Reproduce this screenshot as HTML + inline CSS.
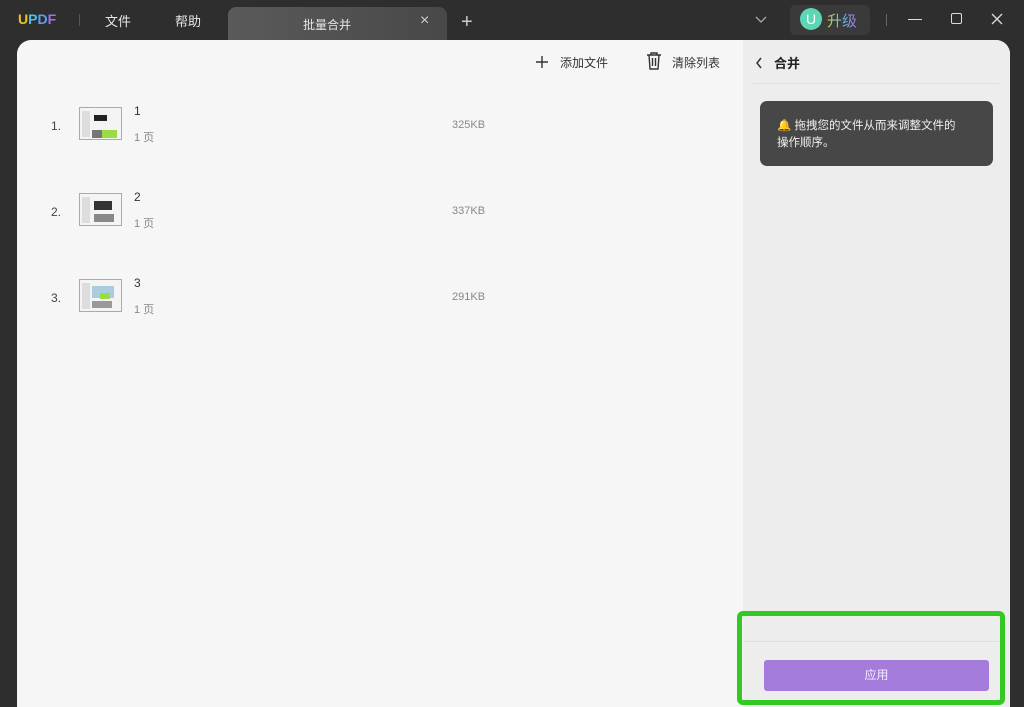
<!DOCTYPE html><html><head><meta charset="utf-8"><style>
*{margin:0;padding:0;box-sizing:border-box}
body{width:1024px;height:707px;background:#2e2e2e;font-family:"Liberation Sans","Noto Sans CJK SC",sans-serif;position:relative;overflow:hidden;font-size:12px}
.a{position:absolute}
.tb{color:#e6e6e6;font-size:13px}
.main{left:17px;top:40px;width:993px;height:667px;background:#f6f6f6;border-radius:14px 14px 0 0;overflow:hidden}
.right{left:726px;top:0;width:267px;height:667px;background:#ededed}
.num{color:#444;font-size:12px}
.th{width:43px;height:33px;background:#f4f4f4;border:1px solid #aaa}
.sz{color:#888;font-size:11px}
</style></head><body>
<div class="a" style="left:18px;top:11px;font-weight:bold;font-size:14px;letter-spacing:0px"><span style="color:#f0c020">U</span><span style="color:#4cc0e8">P</span><span style="color:#5a9ff0">D</span><span style="color:#a070e8">F</span></div>
<div class="a" style="left:79px;top:14px;width:1px;height:12px;background:#555"></div>
<div class="a tb" style="left:105px;top:11px">文件</div>
<div class="a tb" style="left:175px;top:11px">帮助</div>
<div class="a" style="left:228px;top:7px;width:219px;height:33px;background:linear-gradient(90deg,#5a5a5a,#484848);border-radius:8px 8px 0 0"></div>
<div class="a tb" style="left:303px;top:16px;font-size:12px">批量合并</div>
<div class="a" style="left:420px;top:12px;color:#ccc;font-size:16px">×</div>
<div class="a" style="left:461px;top:11px;color:#ccc;font-size:20px;line-height:22px">+</div>
<svg class="a" style="left:754px;top:15px" width="14" height="10"><path d="M2 2l5 5 5-5" stroke="#aaa" fill="none" stroke-width="1.3"/></svg>
<div class="a" style="left:790px;top:5px;width:80px;height:30px;background:#3a3a3a;border-radius:5px"></div>
<div class="a" style="left:800px;top:8px;width:22px;height:22px;border-radius:50%;background:#5dd6b8;color:#fff;text-align:center;line-height:22px;font-size:14px">U</div>
<div class="a" style="left:827px;top:10px;font-size:15px;background:linear-gradient(90deg,#d8d040,#60c0e0,#a070e8);-webkit-background-clip:text;color:transparent">升级</div>
<div class="a" style="left:886px;top:14px;width:1px;height:12px;background:#666"></div>
<div class="a" style="left:908px;top:19px;width:14px;height:1px;background:#ddd"></div>
<div class="a" style="left:951px;top:13px;width:11px;height:11px;border:1.3px solid #ddd;border-radius:2px"></div>
<svg class="a" style="left:991px;top:13px" width="12" height="12"><path d="M1 1l10 10M11 1L1 11" stroke="#ddd" stroke-width="1.3"/></svg>
<div class="a main">
<div class="a right"></div>
<svg class="a" style="left:518px;top:15px" width="14" height="14"><path d="M7 1v12M1 7h12" stroke="#333" stroke-width="1.4"/></svg>
<div class="a" style="left:543px;top:14px;color:#333;font-size:12px">添加文件</div>
<svg class="a" style="left:629px;top:12px" width="16" height="18"><path d="M1 3h14M5 3V1h6v2M3 3l1 14h8l1-14M6.5 6v8M9.5 6v8" stroke="#333" fill="none" stroke-width="1.4"/></svg>
<div class="a" style="left:655px;top:14px;color:#333;font-size:12px">清除列表</div>
<svg class="a" style="left:738px;top:17px" width="8" height="12"><path d="M6 1L2 6l4 5" stroke="#333" fill="none" stroke-width="1.5"/></svg>
<div class="a" style="left:757px;top:13px;color:#222;font-size:13px;font-weight:bold">合并</div>
<div class="a" style="left:736px;top:43px;width:246px;height:1px;background:#e0e0e0"></div>
<div class="a" style="left:743px;top:61px;width:233px;height:65px;background:#474747;border-radius:7px;color:#f0f0f0;font-size:11.5px;line-height:17px;padding:17px 0 0 17px;white-space:nowrap">🔔 拖拽您的文件从而来调整文件的<br>操作顺序。</div>
<div class="a" style="left:726px;top:601px;width:256px;height:1px;background:#ddd"></div>
<div class="a" style="left:747px;top:620px;width:225px;height:31px;background:#a57bdc;border-radius:3px;color:#f3eaff;text-align:center;line-height:31px;font-size:12px">应用</div>
</div>
<div class="a" style="left:737px;top:611px;width:268px;height:94px;border:5px solid #33c922;border-radius:6px"></div>
<div class="a num" style="left:51px;top:119px">1.</div><div class="a th" style="left:79px;top:107px"><div class="a" style="left:2px;top:3px;width:8px;height:26px;background:#ddd"></div><div class="a" style="left:14px;top:7px;width:13px;height:6px;background:#222"></div><div class="a" style="left:12px;top:22px;width:10px;height:8px;background:#777"></div><div class="a" style="left:22px;top:22px;width:15px;height:8px;background:#9d4"></div></div>
<div class="a" style="left:134px;top:104px;color:#333;font-size:12px">1</div><div class="a sz" style="left:134px;top:129px">1 页</div><div class="a sz" style="left:452px;top:119px">325KB</div>
<div class="a num" style="left:51px;top:205px">2.</div><div class="a th" style="left:79px;top:193px"><div class="a" style="left:2px;top:3px;width:8px;height:26px;background:#ddd"></div><div class="a" style="left:14px;top:7px;width:18px;height:9px;background:#333"></div><div class="a" style="left:14px;top:20px;width:20px;height:8px;background:#888"></div></div>
<div class="a" style="left:134px;top:190px;color:#333;font-size:12px">2</div><div class="a sz" style="left:134px;top:215px">1 页</div><div class="a sz" style="left:452px;top:205px">337KB</div>
<div class="a num" style="left:51px;top:291px">3.</div><div class="a th" style="left:79px;top:279px"><div class="a" style="left:2px;top:3px;width:8px;height:26px;background:#ddd"></div><div class="a" style="left:12px;top:6px;width:22px;height:12px;background:#acd"></div><div class="a" style="left:20px;top:13px;width:10px;height:6px;background:#9d4"></div><div class="a" style="left:12px;top:21px;width:20px;height:7px;background:#999"></div></div>
<div class="a" style="left:134px;top:276px;color:#333;font-size:12px">3</div><div class="a sz" style="left:134px;top:301px">1 页</div><div class="a sz" style="left:452px;top:291px">291KB</div>
</body></html>
